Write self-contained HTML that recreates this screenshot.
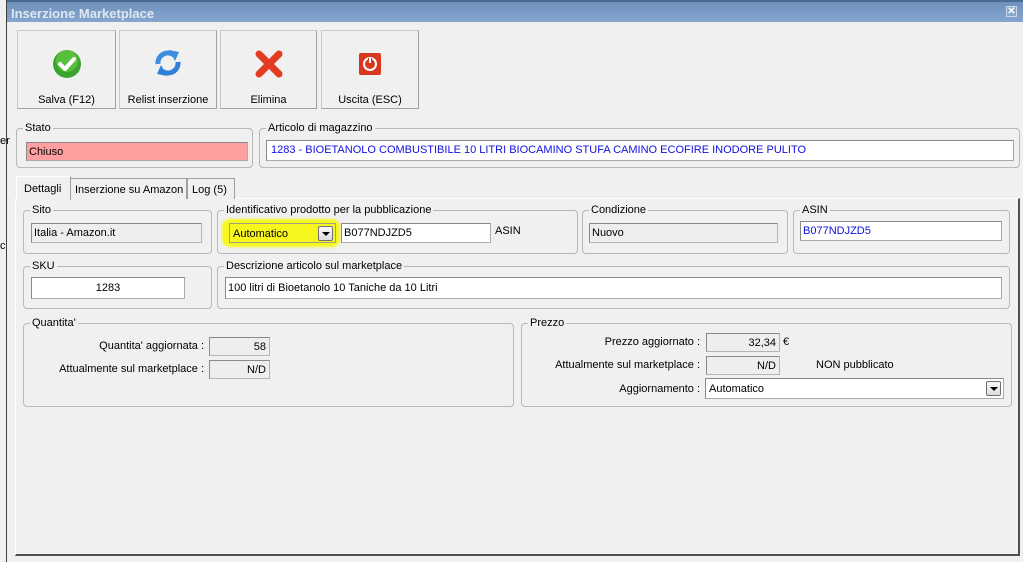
<!DOCTYPE html>
<html><head><meta charset="utf-8"><style>
*{box-sizing:border-box;margin:0;padding:0}
body{width:1023px;height:562px;overflow:hidden;background:#f0f0f0;font-family:"Liberation Sans",sans-serif;font-size:11px;color:#000;position:relative}
.a{position:absolute;white-space:nowrap}
.title{left:7px;top:0;width:1016px;height:22px;background:linear-gradient(#6f90bb,#86a6cf);border-top:2px solid #4a6a92;color:#dfe8f2;font-weight:bold;font-size:13px;padding:4px 0 0 4px}
.btn{top:30px;height:79px;border:1px solid #c8c8c8;border-right-color:#a0a0a0;border-bottom-color:#a0a0a0;background:#f0f0f0;text-align:center}
.btn span{position:absolute;left:0;right:0;top:63px}
.btn svg{position:absolute;left:50%;top:18px;margin-left:-15px}
.g{border:1px solid #b8b8b8;border-radius:4px}
.g .l{position:absolute;top:-7px;left:6px;background:#f0f0f0;padding:0 2px;font-size:11px}
.in{border:1px solid #aaa;border-top-color:#8a8a8a;border-left-color:#8a8a8a;background:#fff;padding:3px 2px 0;white-space:nowrap;overflow:hidden}
.gr{background:#eeeeee;border:1px solid #b5b5b5;border-top-color:#8a8a8a;border-left-color:#8a8a8a}
.blue{color:#1010e0}
.r{text-align:right;padding-right:3px}
.dd{position:absolute;right:2px;top:2px;width:15px;height:15px;border:1px solid #707070;border-radius:2px;background:linear-gradient(#f8f8f8,#ddd)}
.dd:after{content:"";position:absolute;left:3px;top:5px;border:4px solid transparent;border-top:4px solid #000;border-bottom:0}
.tab{top:178px;height:21px;border:1px solid #a0a0a0;border-bottom:none;padding:5px 4px 0;background:#f0f0f0}
</style></head><body>
<div class="a" style="left:0;top:135px;font-size:11px">er</div>
<div class="a" style="left:0;top:240px;font-size:11px">c</div>
<div class="a" style="left:6px;top:0;width:1px;height:562px;background:#404040"></div>
<div class="a title">Inserzione Marketplace</div>
<div class="a" style="left:1006px;top:6px;width:11px;height:11px;border:1px solid #c9d6e6;background:#8aa6ca;color:#fff;font-size:10px;line-height:9px;text-align:center;font-weight:bold">✕</div>

<div class="a btn" style="left:17px;width:99px">
<svg width="30" height="30" viewBox="0 0 30 30"><circle cx="15" cy="15" r="14" fill="#3aa52e"/><circle cx="15" cy="12" r="11" fill="#6cd04a" opacity=".6"/><path d="M8 15l5 5 9-10" stroke="#fff" stroke-width="4" fill="none" stroke-linecap="round" stroke-linejoin="round"/></svg><span>Salva (F12)</span></div>
<div class="a btn" style="left:119px;width:98px">
<svg width="32" height="32" viewBox="0 0 32 32" style="top:16px;margin-left:-16px"><path d="M6 17A10 10 0 0 1 22 8" stroke="#3b8de0" stroke-width="5" fill="none"/><path d="M17 3l10 2-4 9z" fill="#3b8de0"/><path d="M26 15A10 10 0 0 1 10 24" stroke="#2f80d8" stroke-width="5" fill="none"/><path d="M15 29l-10-2 4-9z" fill="#2f80d8"/></svg><span>Relist inserzione</span></div>
<div class="a btn" style="left:220px;width:97px">
<svg width="30" height="30" viewBox="0 0 30 30"><path d="M5 5l20 20M25 5L5 25" stroke="#e23b22" stroke-width="7" stroke-linecap="round"/></svg><span>Elimina</span></div>
<div class="a btn" style="left:321px;width:98px">
<svg width="30" height="30" viewBox="0 0 30 30"><rect x="4" y="4" width="22" height="22" rx="2" fill="#d9381e"/><circle cx="15" cy="15" r="6" stroke="#fff" stroke-width="2" fill="none"/><path d="M15 9v6" stroke="#d9381e" stroke-width="4"/><path d="M15 9v5" stroke="#fff" stroke-width="2"/></svg><span>Uscita (ESC)</span></div>

<div class="a g" style="left:16px;top:128px;width:237px;height:40px"><span class="l">Stato</span></div>
<div class="a in" style="left:26px;top:142px;width:222px;height:19px;background:#ffa0a0">Chiuso</div>
<div class="a g" style="left:259px;top:128px;width:761px;height:40px"><span class="l">Articolo di magazzino</span></div>
<div class="a in blue" style="left:266px;top:140px;width:748px;height:21px;padding-left:4px">1283 - BIOETANOLO COMBUSTIBILE 10 LITRI BIOCAMINO STUFA CAMINO ECOFIRE INODORE PULITO</div>

<div class="a" style="left:15px;top:198px;width:1005px;height:358px;border:1px solid #fff;border-right:2px solid #505050;border-bottom:2px solid #505050"></div>
<div class="a tab" style="left:70px;width:117px">Inserzione su Amazon</div>
<div class="a tab" style="left:187px;width:48px">Log (5)</div>
<div class="a tab" style="left:16px;top:176px;height:24px;width:55px;border-color:#fff #a0a0a0 transparent #fff;padding-top:6px;padding-left:7px">Dettagli</div>

<div class="a g" style="left:23px;top:210px;width:189px;height:44px"><span class="l">Sito</span></div>
<div class="a in gr" style="left:31px;top:223px;width:171px;height:20px">Italia - Amazon.it</div>
<div class="a g" style="left:217px;top:210px;width:361px;height:44px"><span class="l">Identificativo prodotto per la pubblicazione</span></div>
<div class="a" style="left:222px;top:219px;width:118px;height:28px;background:#f7f71e;border-radius:8px;filter:blur(1px)"></div>
<div class="a" style="left:229px;top:223px;width:107px;height:20px;border:1px solid #a0a080;padding:4px 3px;font-size:11px">Automatico<div class="dd"></div></div>
<div class="a in" style="left:341px;top:223px;width:150px;height:20px">B077NDJZD5</div>
<div class="a" style="left:495px;top:225px">ASIN</div>
<div class="a g" style="left:582px;top:210px;width:206px;height:44px"><span class="l">Condizione</span></div>
<div class="a in gr" style="left:589px;top:223px;width:189px;height:20px">Nuovo</div>
<div class="a g" style="left:793px;top:210px;width:217px;height:44px"><span class="l">ASIN</span></div>
<div class="a in blue" style="left:800px;top:221px;width:202px;height:20px">B077NDJZD5</div>

<div class="a g" style="left:23px;top:266px;width:189px;height:43px"><span class="l">SKU</span></div>
<div class="a in" style="left:31px;top:277px;width:154px;height:22px;text-align:center;padding-top:4px">1283</div>
<div class="a g" style="left:217px;top:266px;width:793px;height:43px"><span class="l">Descrizione articolo sul marketplace</span></div>
<div class="a in" style="left:225px;top:277px;width:777px;height:22px;padding-top:4px">100 litri di Bioetanolo 10 Taniche da 10 Litri</div>

<div class="a g" style="left:23px;top:323px;width:491px;height:84px"><span class="l">Quantita'</span></div>
<div class="a" style="left:40px;top:340px;width:164px;text-align:right">Quantita' aggiornata :</div>
<div class="a in gr r" style="left:209px;top:337px;width:61px;height:19px">58</div>
<div class="a" style="left:40px;top:363px;width:164px;text-align:right">Attualmente sul marketplace :</div>
<div class="a in gr r" style="left:209px;top:360px;width:61px;height:19px">N/D</div>

<div class="a g" style="left:521px;top:323px;width:491px;height:84px"><span class="l">Prezzo</span></div>
<div class="a" style="left:530px;top:336px;width:170px;text-align:right">Prezzo aggiornato :</div>
<div class="a in gr r" style="left:706px;top:333px;width:74px;height:19px">32,34</div>
<div class="a" style="left:783px;top:336px">€</div>
<div class="a" style="left:530px;top:359px;width:170px;text-align:right">Attualmente sul marketplace :</div>
<div class="a in gr r" style="left:706px;top:356px;width:74px;height:19px">N/D</div>
<div class="a" style="left:816px;top:359px">NON pubblicato</div>
<div class="a" style="left:530px;top:383px;width:170px;text-align:right">Aggiornamento :</div>
<div class="a in" style="left:705px;top:378px;width:299px;height:21px;padding-left:3px;padding-top:4px">Automatico<div class="dd"></div></div>
</body></html>
